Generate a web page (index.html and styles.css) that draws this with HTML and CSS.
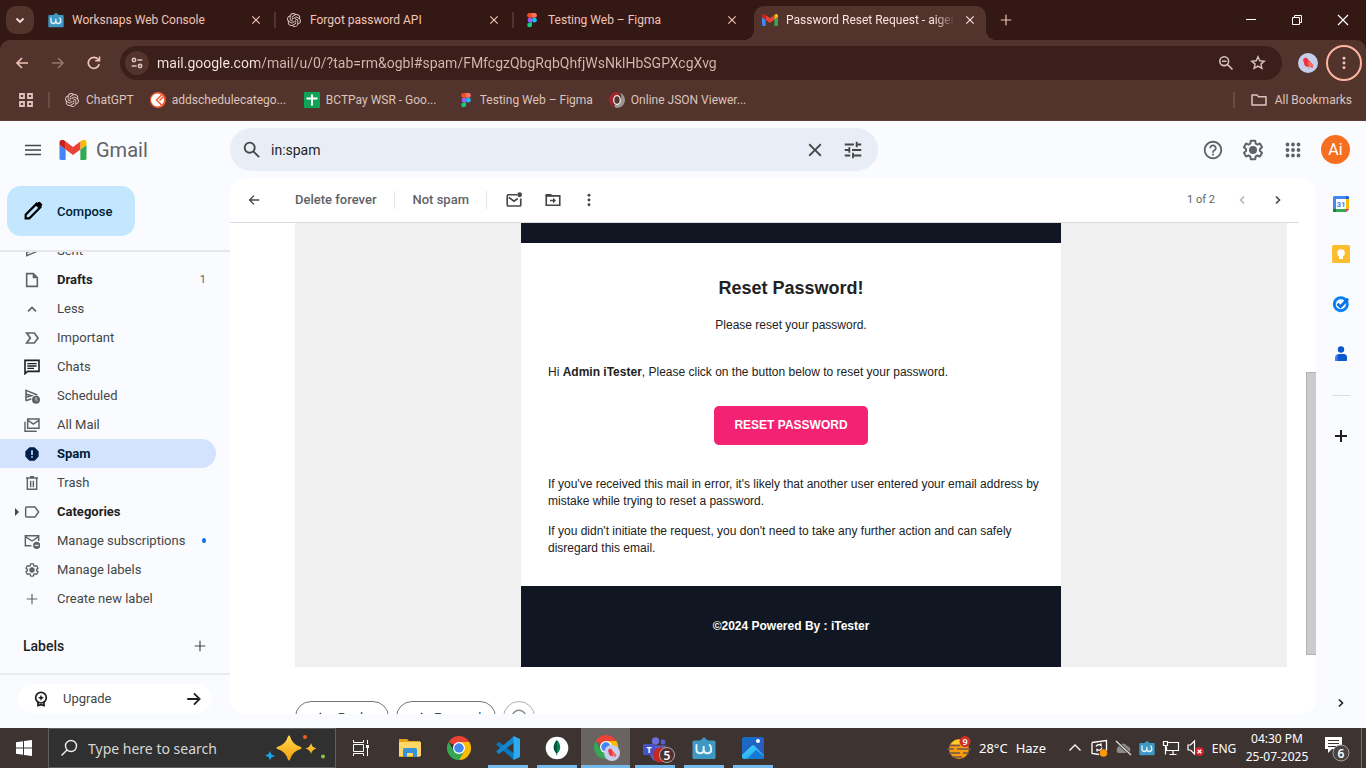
FILE: index.html
```html
<!DOCTYPE html>
<html lang="en">
<head>
<meta charset="utf-8">
<title>Password Reset Request - Gmail</title>
<link rel="stylesheet" href="styles.css">
</head>
<body>
<svg class="sprite" aria-hidden="true">
  <symbol id="openai" viewBox="0 0 24 24"><path fill="currentColor" d="M22.28 9.82a5.98 5.98 0 0 0-.52-4.91 6.05 6.05 0 0 0-6.51-2.9A6.07 6.07 0 0 0 4.98 4.18a5.98 5.98 0 0 0-4 2.9 6.05 6.05 0 0 0 .74 7.1 5.98 5.98 0 0 0 .51 4.91 6.05 6.05 0 0 0 6.52 2.9A5.98 5.98 0 0 0 13.26 24a6.06 6.06 0 0 0 5.77-4.21 5.99 5.99 0 0 0 4-2.9 6.06 6.06 0 0 0-.75-7.07zm-9.02 12.61a4.48 4.48 0 0 1-2.88-1.04l.14-.08 4.78-2.76a.79.79 0 0 0 .39-.68v-6.74l2.02 1.17a.07.07 0 0 1 .04.05v5.58a4.5 4.5 0 0 1-4.49 4.5zM3.6 18.3a4.47 4.47 0 0 1-.53-3.01l.14.08 4.78 2.76a.77.77 0 0 0 .78 0l5.84-3.37v2.33a.08.08 0 0 1-.03.06l-4.84 2.8A4.5 4.5 0 0 1 3.6 18.3zM2.34 7.9a4.49 4.49 0 0 1 2.37-1.98v5.68a.77.77 0 0 0 .38.68l5.82 3.35-2.02 1.17a.08.08 0 0 1-.07 0l-4.83-2.79A4.5 4.5 0 0 1 2.34 7.9zm16.6 3.85L13.1 8.36l2.02-1.16a.08.08 0 0 1 .07 0l4.83 2.79a4.49 4.49 0 0 1-.68 8.1v-5.67a.79.79 0 0 0-.4-.67zm2-3.02l-.14-.09-4.77-2.78a.78.78 0 0 0-.79 0L9.41 9.23V6.9a.07.07 0 0 1 .03-.06l4.83-2.79a4.5 4.5 0 0 1 6.68 4.66zM8.3 12.86l-2.02-1.16a.08.08 0 0 1-.03-.06V6.07a4.5 4.5 0 0 1 7.37-3.45l-.14.08L8.7 5.46a.79.79 0 0 0-.39.68zm1.1-2.36l2.6-1.5 2.61 1.5v3l-2.6 1.5-2.61-1.5z"/></symbol>
  <symbol id="figma" viewBox="0 0 16 16"><path d="M8 1H5.5a2.4 2.4 0 0 0 0 4.800H8z" fill="#f24e1e"/><path d="M8 1h2.500a2.400 2.400 0 0 1 0 4.800H8z" fill="#ff7262"/><path d="M8 5.800H5.500a2.400 2.400 0 0 0 0 4.700H8z" fill="#a259ff"/><circle cx="10.400" cy="8.150" r="2.400" fill="#1abcfe"/><path d="M8 10.500H5.500A2.400 2.400 0 1 0 8 12.900z" fill="#0acf83"/></symbol>
  <symbol id="worksnaps" viewBox="0 0 24 24"><path d="M3 4.500h5L12 1l4 3.500h5A2 2 0 0 1 23.500 7v14.500a1.500 1.500 0 0 1-1.500 1.500H2A1.500 1.500 0 0 1 .5 21.500V7A2 2 0 0 1 3 4.500z" fill="#3f98c4"/><path d="M4.500 9v4.500c0 5 7.200 5 7.200 0V10v3.500c0 5 7.500 5 7.500 0 0-2-.5-3.500-1.500-4.500" fill="none" stroke="#e6f4fa" stroke-width="2" stroke-linecap="round"/></symbol>
  <symbol id="gmail" viewBox="0 0 54 40"><path d="M3.700 40h8.600V19L0 9.800v26.500A3.700 3.700 0 0 0 3.700 40z" fill="#4285f4"/><path d="M41.700 40h8.600a3.700 3.700 0 0 0 3.700-3.700V9.800L41.700 19z" fill="#34a853"/><path d="M41.700 3.100V19L54 9.800V4.900c0-4.500-5.200-7.100-8.800-4.400z" fill="#fbbc04"/><path d="M12.300 19V3.100L27 14.100 41.700 3.100V19L27 30z" fill="#ea4335"/><path d="M0 4.900v4.900L12.300 19V3.100L8.800.5C5.200-2.200 0 .4 0 4.900z" fill="#c5221f"/></symbol>
  <symbol id="x" viewBox="0 0 24 24"><path fill="currentColor" d="M19 6.410 17.590 5 12 10.590 6.410 5 5 6.410 10.590 12 5 17.590 6.410 19 12 13.410 17.590 19 19 17.590 13.410 12z"/></symbol>
  <symbol id="plus" viewBox="0 0 24 24"><path fill="none" stroke="currentColor" stroke-width="2" d="M12 3v18M3 12h18"/></symbol>
  <symbol id="left" viewBox="0 0 24 24"><path fill="none" stroke="currentColor" stroke-width="2.400" d="M21 12H5M12 4.500 4.500 12l7.500 7.500"/></symbol>
  <symbol id="right" viewBox="0 0 24 24"><path fill="none" stroke="currentColor" stroke-width="2.400" d="M3 12h16M12 4.500l7.500 7.500-7.500 7.500"/></symbol>
  <symbol id="chev" viewBox="0 0 24 24"><path fill="none" stroke="currentColor" stroke-width="3.200" d="m8 5 7 7-7 7"/></symbol>
  <symbol id="dots" viewBox="0 0 24 24"><g fill="currentColor"><circle cx="12" cy="5" r="2.200"/><circle cx="12" cy="12" r="2.200"/><circle cx="12" cy="19" r="2.200"/></g></symbol>
  <symbol id="gear" viewBox="0 0 24 24"><path fill="currentColor" d="M13.850 22.250h-3.700c-.74 0-1.360-.54-1.450-1.270l-.27-1.890c-.27-.14-.53-.29-.79-.46l-1.800.72c-.7.26-1.470-.03-1.810-.65L2.200 15.530c-.35-.66-.2-1.440.36-1.880l1.530-1.190c-.01-.15-.02-.3-.02-.46 0-.15.01-.31.02-.46l-1.520-1.190c-.59-.45-.74-1.260-.37-1.880l1.850-3.190c.34-.62 1.110-.9 1.790-.63l1.810.73c.26-.17.52-.32.78-.46l.27-1.910c.09-.7.71-1.250 1.440-1.250h3.700c.74 0 1.360.54 1.450 1.270l.27 1.890c.27.14.53.29.79.46l1.800-.72c.71-.26 1.480.03 1.820.65l1.840 3.180c.36.66.2 1.440-.36 1.880l-1.520 1.190c.01.15.02.3.02.46s-.01.31-.02.46l1.520 1.190c.56.45.72 1.230.37 1.860l-1.860 3.220c-.34.62-1.110.9-1.800.63l-1.800-.72c-.26.17-.52.32-.78.46l-.27 1.910c-.1.68-.72 1.220-1.460 1.220zm-3.230-2h2.760l.37-2.550.53-.22c.44-.18.88-.44 1.340-.78l.45-.34 2.380.96 1.380-2.400-2.030-1.580.07-.56c.03-.26.06-.51.06-.78s-.03-.53-.06-.78l-.07-.56 2.030-1.580-1.390-2.400-2.390.96-.45-.35c-.42-.32-.87-.58-1.330-.77l-.52-.22-.37-2.550h-2.760l-.37 2.550-.53.21c-.44.19-.88.44-1.340.79l-.45.33-2.380-.95-1.390 2.390 2.030 1.580-.07.56a7 7 0 0 0-.06.79c0 .26.02.53.06.78l.07.56-2.030 1.580 1.380 2.400 2.390-.96.45.35c.43.33.86.58 1.330.77l.53.22.38 2.550z"/><circle cx="12" cy="12" r="4" fill="currentColor"/></symbol>
  <symbol id="chrome" viewBox="0 0 48 48"><path d="M24 24 3.200 12A24 24 0 0 1 44.800 12H24z" fill="#ea4335"/><path d="M24 24 13.600 30 3.200 12A24 24 0 0 0 24 48l10.400-18z" fill="#34a853"/><path d="M24 12h20.800A24 24 0 0 1 24 48l10.400-18z" fill="#fbbc04"/><circle cx="24" cy="24" r="12" fill="#fff"/><circle cx="24" cy="24" r="9.500" fill="#4285f4"/></symbol>
  <symbol id="bird" viewBox="0 0 20 20"><circle cx="10" cy="10" r="10" fill="#c7cdec"/><path d="M5 6.500 6.500 5c2-.5 3 .2 3.500 1.500l5.500 6-1 .5.500 2-3.500-1.500c-3 1-5.500-.5-5.500-3.500z" fill="#f0333f"/><path d="m10 8 5.500 4.500L11 14z" fill="#ff775f"/><path d="m10.500 13.500.5 2.500" stroke="#c96" stroke-width=".8"/></symbol>
</svg>

<header class="browser">
  <div class="tabstrip">
    <button class="tabsearch" aria-label="Search tabs"><svg class="i16" viewBox="0 0 16 16"><path d="m4.500 6.500 3.500 3.500 3.500-3.500" fill="none" stroke="currentColor" stroke-width="1.800"/></svg></button>
    <div class="tab"><svg class="i16"><use href="#worksnaps"/></svg><span class="title">Worksnaps Web Console</span><button aria-label="Close tab"><svg class="i14"><use href="#x"/></svg></button></div>
    <div class="tab"><svg class="i14 tint"><use href="#openai"/></svg><span class="title">Forgot password API</span><button aria-label="Close tab"><svg class="i14"><use href="#x"/></svg></button></div>
    <div class="tab"><svg class="i16"><use href="#figma"/></svg><span class="title">Testing Web – Figma</span><button aria-label="Close tab"><svg class="i14"><use href="#x"/></svg></button></div>
    <div class="tab active"><svg class="i16 mailfav"><use href="#gmail"/></svg><span class="title">Password Reset Request - aigen</span><button aria-label="Close tab"><svg class="i14"><use href="#x"/></svg></button></div>
    <button class="newtab" aria-label="New tab"><svg class="i14"><use href="#plus"/></svg></button>
    <div class="winctl">
      <button aria-label="Minimize"><svg class="i12" viewBox="0 0 12 12"><path d="M1 5.500h10" stroke="currentColor"/></svg></button>
      <button aria-label="Restore"><svg class="i12" viewBox="0 0 12 12"><path d="M1.500 3.500h7v7h-7zM3.500 3.500v-2h7v7h-2" fill="none" stroke="currentColor"/></svg></button>
      <button aria-label="Close"><svg class="i12" viewBox="0 0 12 12"><path d="m1 1 10 10M11 1 1 11" stroke="currentColor" stroke-width="1.200"/></svg></button>
    </div>
  </div>
  <div class="navbar">
    <button class="navbtn" aria-label="Back"><svg class="i16"><use href="#left"/></svg></button>
    <button class="navbtn dim" aria-label="Forward"><svg class="i16"><use href="#right"/></svg></button>
    <button class="navbtn" aria-label="Reload"><svg class="i16" viewBox="0 0 16 16"><path d="M13.200 9A5.500 5.500 0 1 1 12 4.300l1.200 1.200M13.500 1.500v4.300H9.200" fill="none" stroke="currentColor" stroke-width="1.600"/></svg></button>
    <div class="omnibox">
      <button class="siteinfo" aria-label="Site information"><svg class="i14" viewBox="0 0 16 16"><g fill="none" stroke="currentColor" stroke-width="1.800"><circle cx="4.500" cy="4.500" r="1.900"/><path d="M8.500 4.500H14M2 11.500h5.500"/><circle cx="11.500" cy="11.500" r="1.900"/></g></svg></button>
      <input class="url" type="text" aria-label="Address" value="mail.google.com/mail/u/0/?tab=rm&amp;ogbl#spam/FMfcgzQbgRqbQhfjWsNklHbSGPXcgXvg">
      <button class="omnibtn" aria-label="Zoom"><svg class="i16" viewBox="0 0 16 16"><g fill="none" stroke="currentColor" stroke-width="1.600"><circle cx="6.200" cy="6.200" r="4.400"/><path d="m9.500 9.500 5 5M4 6.200h4.400"/></g></svg></button>
      <button class="omnibtn" aria-label="Bookmark this tab"><svg class="i16" viewBox="0 0 16 16"><path d="m8 1.800 1.800 4 4.400.4-3.300 2.900 1 4.300L8 11.100l-3.900 2.300 1-4.300-3.300-2.900 4.400-.4z" fill="none" stroke="currentColor" stroke-width="1.400"/></svg></button>
    </div>
    <button class="profile" aria-label="Profile"><svg class="i20"><use href="#bird"/></svg></button>
    <button class="menu" aria-label="Menu"><svg class="i16"><use href="#dots"/></svg></button>
  </div>
  <nav class="bookmarks" aria-label="Bookmarks">
    <button class="apps" aria-label="Apps"><svg class="i16" viewBox="0 0 16 16"><path d="M2 2h4v4H2zM10 2h4v4h-4zM2 10h4v4H2zM10 10h4v4h-4z" fill="none" stroke="currentColor" stroke-width="1.800"/></svg></button>
    <span class="bsep"></span>
    <a href="#"><svg class="i16 tint pad1"><use href="#openai"/></svg>ChatGPT</a>
    <a href="#" class="wide"><svg class="i16" viewBox="0 0 16 16"><circle cx="8" cy="8" r="8" fill="#f4572f"/><circle cx="7.500" cy="8" r="6.500" fill="#fff"/><path d="M12.500 2 6.500 8l5.500 5.500M9.500 8.500 13 5" fill="none" stroke="#f4572f" stroke-width="1.500"/></svg>addschedulecatego...</a>
    <a href="#" class="wide"><svg class="i16" viewBox="0 0 16 16"><rect width="16" height="16" rx="1" fill="#0fa556"/><path d="M8 2.500v11M2.500 6.500h11" stroke="#fff" stroke-width="2"/></svg>BCTPay WSR - Goo...</a>
    <a href="#"><svg class="i16"><use href="#figma"/></svg>Testing Web – Figma</a>
    <a href="#"><svg class="i16" viewBox="0 0 16 16"><path d="M8 0a8 8 0 0 0-3 15.400A8 8 0 0 1 10.500 3C11 1.500 10 .3 8 0z" fill="#a5232c"/><path d="M8 16a8 8 0 0 0 3-15.400A8 8 0 0 1 5.500 13c-.5 1.500.5 2.700 2.500 3z" fill="#9a9694"/><ellipse cx="8" cy="8" rx="3.300" ry="4.500" fill="#52342c" stroke="#e9e1df" stroke-width="1.400"/></svg>Online JSON Viewer...</a>
    <span class="bsep last"></span>
    <a href="#" class="all"><svg class="i16" viewBox="0 0 16 16"><path d="M1 3h5l1.500 1.800H15V13H1z" fill="none" stroke="currentColor" stroke-width="1.500" stroke-linejoin="round"/></svg>All Bookmarks</a>
  </nav>
</header>

<div class="app">
  <header class="gbar">
    <div class="brand">
      <button class="burger" aria-label="Main menu"><svg class="i18" viewBox="0 0 18 18"><path d="M1 4.500h16M1 9h16M1 13.500h16" stroke="currentColor" stroke-width="1.500"/></svg></button>
      <svg class="logo"><use href="#gmail"/></svg><span class="wordmark">Gmail</span>
    </div>
    <form class="search" role="search">
      <button type="button" aria-label="Search mail"><svg class="i22" viewBox="0 0 24 24"><path fill="currentColor" d="M20.490 19l-5.730-5.730C15.530 12.200 16 10.910 16 9.500A6.500 6.500 0 1 0 9.500 16c1.410 0 2.700-.47 3.770-1.240L19 20.490 20.490 19zM5 9.500C5 7.010 7.010 5 9.500 5S14 7.010 14 9.500 11.990 14 9.500 14 5 11.990 5 9.500z"/></svg></button>
      <input type="text" aria-label="Search mail" value="in:spam">
      <button type="button" aria-label="Clear search"><svg class="i22"><use href="#x"/></svg></button>
      <button type="button" aria-label="Search options"><svg class="i22" viewBox="0 0 24 24"><path fill="currentColor" d="M3 17v2h6v-2H3zM3 5v2h10V5H3zm10 16v-2h8v-2h-8v-2h-2v6h2zM7 9v2H3v2h4v2h2V9H7zm14 4v-2H11v2h10zm-6-4h2V7h4V5h-4V3h-2v6z"/></svg></button>
    </form>
    <div class="gtools">
      <button aria-label="Support"><svg class="i22" viewBox="0 0 24 24"><path fill="currentColor" d="M11 18h2v-2h-2v2zm1-16C6.480 2 2 6.480 2 12s4.480 10 10 10 10-4.480 10-10S17.520 2 12 2zm0 18c-4.410 0-8-3.590-8-8s3.590-8 8-8 8 3.590 8 8-3.590 8-8 8zm0-14c-2.210 0-4 1.790-4 4h2c0-1.100.9-2 2-2s2 .9 2 2c0 2-3 1.750-3 5h2c0-2.250 3-2.500 3-5 0-2.210-1.790-4-4-4z"/></svg></button>
      <button aria-label="Settings"><svg class="i22" viewBox="1 1 22 22"><use href="#gear" width="24" height="24"/></svg></button>
      <button aria-label="Google apps"><svg class="i16" viewBox="0 0 16 16"><path d="M2.500 2.500h0M8 2.500h0M13.500 2.500h0M2.500 8h0M8 8h0M13.500 8h0M2.500 13.500h0M8 13.500h0M13.500 13.500h0" stroke="currentColor" stroke-width="3.800" stroke-linecap="round"/></svg></button>
      <button class="avatar" aria-label="Account">Ai</button>
    </div>
  </header>

  <div class="body">
    <aside class="sidebar">
      <div class="composewrap"><button class="compose"><svg class="i22" viewBox="0 0 24 24"><path d="M4 20v-4L16 4l4 4L8 20z" fill="none" stroke="currentColor" stroke-width="2.400"/><path d="m14.500 5.500 3-3a1.800 1.800 0 0 1 2.500 0L21.500 4a1.800 1.800 0 0 1 0 2.500l-3 3z" fill="currentColor"/></svg><span>Compose</span></button></div>
      <nav class="folders" aria-label="Folders">
        <ul>
          <li><a href="#"><svg class="i16" viewBox="0 0 24 24"><path d="M4 5v14l17-7zM4 10l7 2-7 2" fill="none" stroke="currentColor" stroke-width="2"/></svg>Sent</a></li>
          <li><a href="#" class="bold"><svg class="i16" viewBox="0 0 24 24"><path d="M4 2.500h10l6 6v13H4z" fill="none" stroke="currentColor" stroke-width="2.400"/><path d="M13 2v7.500h7z" fill="currentColor"/></svg>Drafts<span class="count">1</span></a></li>
          <li><a href="#"><svg class="i16" viewBox="0 0 24 24"><path d="m6 15.500 6-6 6 6" fill="none" stroke="currentColor" stroke-width="2.400"/></svg>Less</a></li>
          <li><a href="#"><svg class="i16" viewBox="0 0 24 24"><path d="M4 4.500h11.500l5.500 7.500-5.500 7.500H4L9.500 12z" fill="none" stroke="currentColor" stroke-width="2.600"/></svg>Important</a></li>
          <li><a href="#"><svg class="i16 black" viewBox="0 0 24 24"><path d="M1.500 2h21v16.500H5.500L1.500 22z" fill="none" stroke="currentColor" stroke-width="2.400"/><path d="M5 7h14M5 10.500h14M5 14h10" stroke="currentColor" stroke-width="2"/></svg>Chats</a></li>
          <li><a href="#"><svg class="i16" viewBox="0 0 24 24"><path d="M3 19V3.500l17 7M3 9l8 2.500L3 14" fill="none" stroke="currentColor" stroke-width="2.400"/><path d="m3 19 8-3" stroke="currentColor" stroke-width="2.400"/><circle cx="18" cy="17.500" r="6" fill="currentColor"/><path d="M18 14v3.500l2 1.500" fill="none" stroke="#f8fafd" stroke-width="1.300"/></svg>Scheduled</a></li>
          <li><a href="#"><svg class="i16" viewBox="0 0 24 24"><path d="M5.500 3H22.500v14H5.500zM6 5l8 5.500L22 5M1.500 7v14.500H19" fill="none" stroke="currentColor" stroke-width="2.200"/></svg>All Mail</a></li>
          <li><a href="#" class="bold on" aria-current="page"><svg class="i16" viewBox="0 0 24 24"><path d="M8.500 3h7L21 8.500v7L15.500 21h-7L3 15.500v-7z" fill="currentColor" stroke="currentColor" stroke-linejoin="round" stroke-width="2"/><path d="M12 6.500v7M12 15.500v2.200" stroke="#d3e3fd" stroke-width="2.400"/></svg>Spam</a></li>
          <li><a href="#"><svg class="i16" viewBox="0 0 24 24"><path d="M5 5v16.500h14V5M3 4.500h18M9 2.500h6M10 8.500v10M14 8.500v10" fill="none" stroke="currentColor" stroke-width="2.200"/></svg>Trash</a></li>
          <li><a href="#" class="bold expand"><svg class="i16" viewBox="0 0 24 24"><path d="M2.500 6A1.500 1.500 0 0 1 4 4.500h12.500L22 12l-5.500 7.500H4A1.500 1.500 0 0 1 2.500 18z" fill="none" stroke="currentColor" stroke-width="2.200"/></svg>Categories</a></li>
          <li><a href="#"><svg class="i16" viewBox="0 0 24 24"><path d="M11 19H2V4h20v8M2 5.500l10 6.500 10-6.500" fill="none" stroke="currentColor" stroke-width="2.200"/><circle cx="19" cy="18.500" r="5.500" fill="currentColor"/><path d="M16 18.500h6" stroke="#f8fafd" stroke-width="1.600"/></svg>Manage subscriptions<span class="dot"></span></a></li>
          <li><a href="#"><svg class="i16"><use href="#gear"/></svg>Manage labels</a></li>
          <li><a href="#"><svg class="i16 thin"><use href="#plus"/></svg>Create new label</a></li>
        </ul>
        <div class="labels"><h2>Labels</h2><button aria-label="Create new label"><svg class="i14"><use href="#plus"/></svg></button></div>
      </nav>
      <div class="upwrap"><a class="upgrade" href="#"><svg class="i16" viewBox="0 0 24 24"><path d="M7.500 16v6l4.500-1.500 4.500 1.500v-6" fill="none" stroke="currentColor" stroke-width="2.600"/><circle cx="12" cy="10" r="8" fill="none" stroke="currentColor" stroke-width="2.600"/><path d="m12 5.500 1.400 3 3.100 1.500-3.100 1.500-1.400 3-1.400-3L7.500 10l3.100-1.500z" fill="currentColor"/></svg><span>Upgrade</span><svg class="i18"><use href="#right"/></svg></a></div>
    </aside>

    <main class="panel">
      <div class="mailbar">
        <button class="ico back" aria-label="Back to Spam"><svg class="i14"><use href="#left"/></svg></button>
        <button class="act">Delete forever</button>
        <button class="act">Not spam</button>
        <button class="ico unread" aria-label="Mark as unread"><svg class="i18" viewBox="0 0 24 24"><path d="M16 5H4.500A1.500 1.500 0 0 0 3 6.500v12A1.500 1.500 0 0 0 4.500 20h15a1.500 1.500 0 0 0 1.500-1.500V10M5 8.500l7 5 5-3.500" fill="none" stroke="currentColor" stroke-width="2.200"/><circle cx="19.500" cy="5" r="3.200" fill="currentColor"/></svg></button>
        <button class="ico" aria-label="Move to"><svg class="i18" viewBox="0 0 24 24"><path d="M3 6.500h18V19H3z" fill="none" stroke="currentColor" stroke-width="2.200"/><path d="M2 4h7.500l2.500 3H2z" fill="currentColor"/><path d="M8 12.800h6" stroke="currentColor" stroke-width="2"/><path d="M12 9l4 3.800-4 3.800z" fill="currentColor"/></svg></button>
        <button class="ico" aria-label="More"><svg class="i16"><use href="#dots"/></svg></button>
        <span class="pos">1 of 2</span>
        <button class="ico off" aria-label="Newer"><svg class="i12 flip"><use href="#chev"/></svg></button>
        <button class="ico" aria-label="Older"><svg class="i12"><use href="#chev"/></svg></button>
      </div>
      <div class="scroll">
        <div class="canvas">
          <article class="mail">
            <div class="navy top"></div>
            <div class="content">
              <h1>Reset Password!</h1>
              <p class="sub">Please reset your password.</p>
              <p class="hi">Hi <b>Admin iTester</b>, Please click on the button below to reset your password.</p>
              <a class="reset" href="#">RESET PASSWORD</a>
              <p class="note">If you've received this mail in error, it's likely that another user entered your email address by mistake while trying to reset a password.</p>
              <p class="note">If you didn't initiate the request, you don't need to take any further action and can safely disregard this email.</p>
            </div>
            <footer class="navy foot">©2024 Powered By : iTester</footer>
          </article>
        </div>
        <div class="replies">
          <button class="rep"><svg class="i16" viewBox="0 0 24 24"><path d="M9 6 4 11l5 5M4 11h11c3 0 5 2 5 6" fill="none" stroke="currentColor" stroke-width="2"/></svg>Reply</button>
          <button class="rep"><svg class="i16" viewBox="0 0 24 24"><path d="m15 6 5 5-5 5M20 11H9c-3 0-5 2-5 6" fill="none" stroke="currentColor" stroke-width="2"/></svg>Forward</button>
          <button class="emoji" aria-label="Add reaction"><svg class="i18" viewBox="0 0 24 24"><circle cx="12" cy="12" r="9" fill="none" stroke="currentColor" stroke-width="2"/></svg></button>
        </div>
      </div>
      <div class="thumb"></div>
    </main>

    <aside class="rail" aria-label="Side panel">
      <button aria-label="Calendar"><svg class="i18" viewBox="0 0 18 18"><rect x="1" y="1" width="16" height="16" rx="1.500" fill="#4285f4"/><path d="M14 4h3v10h-3z" fill="#fbbc04"/><path d="M14 1h1.500A1.500 1.500 0 0 1 17 2.500V4h-3z" fill="#1967d2"/><path d="M4 14h10v3H4z" fill="#34a853"/><path d="M1 14h3v3H2.500A1.500 1.500 0 0 1 1 15.500z" fill="#188038"/><path d="M14 14h3l-3 3z" fill="#ea4335"/><path d="m17.500 14-3.500 3.500h3.500z" fill="#f8fafd"/><path d="M4 4h10v10H4z" fill="#fff"/><text x="9" y="12" text-anchor="middle" class="caltext">31</text></svg></button>
      <button aria-label="Keep"><svg class="i18" viewBox="0 0 18 18"><rect width="18" height="18" rx="1.500" fill="#fdbd31"/><circle cx="9" cy="8" r="3.800" fill="#fff"/><path d="M7 10h4v4H7z" fill="#fff"/></svg></button>
      <button aria-label="Tasks"><svg class="i18" viewBox="0 0 18 18"><circle cx="8.800" cy="9.200" r="6.500" fill="none" stroke="#0b80f5" stroke-width="3"/><path d="m5.500 8.800 3 3 7.500-8" fill="none" stroke="#0b6fe0" stroke-width="2.800"/></svg></button>
      <button aria-label="Contacts"><svg class="i18" viewBox="0 0 18 18"><circle cx="9" cy="4.500" r="3.200" fill="#0b57d0"/><path d="M3 16v-3a4 4 0 0 1 4-4h4a4 4 0 0 1 4 4v3z" fill="#4f7df0"/><path d="M5.500 16v-4a3 3 0 0 1 3-3H11a4 4 0 0 1 4 4v1a2 2 0 0 1-2 2z" fill="#0b57d0"/></svg></button>
      <span class="rule"></span>
      <button aria-label="Get add-ons"><svg class="i16 black" viewBox="0 0 16 16"><path d="M8 2v12M2 8h12" stroke="currentColor" stroke-width="2"/></svg></button>
      <button class="end black" aria-label="Hide side panel"><svg class="i12"><use href="#chev"/></svg></button>
    </aside>
  </div>
</div>

<footer class="taskbar">
  <button class="start" aria-label="Start"><svg class="i16" viewBox="0 0 16 16"><path d="m0 2.200 7-1v6.300H0zM8 1.100 16 0v7.500H8zM0 8.500h7v6.300l-7-1zM8 8.500h8V16l-8-1.100z" fill="#fff"/></svg></button>
  <label class="tsearch"><svg class="i18" viewBox="0 0 18 18"><g fill="none" stroke="#eee" stroke-width="1.400"><circle cx="11" cy="7" r="5.500"/><path d="M7 11 1.500 16.500"/></g></svg><input type="text" placeholder="Type here to search" aria-label="Type here to search">
    <svg class="spark" viewBox="0 0 62 28"><defs><linearGradient id="gold" x2="0" y2="1"><stop stop-color="#ffd84a"/><stop offset="1" stop-color="#f5a10c"/></linearGradient></defs><path d="M24 2.500q2.500 9 11.500 11.500-9 2.500-11.500 11.500-2.500-9-11.500-11.500 9-2.500 11.500-11.500z" fill="url(#gold)" stroke="url(#gold)" stroke-width="2" stroke-linejoin="round"/><path d="M46 9q1 4.500 5.500 5.500-4.500 1-5.500 5.500-1-4.500-5.500-5.500 4.500-1 5.500-5.500z" fill="url(#gold)"/><path d="m5 17 1.500 3.500L10 22l-3.500 1.500L5 26l-1.500-3L0 21.500 3.500 20z" fill="#18a5e8"/><circle cx="40" cy="3" r="2" fill="#ef6224"/><circle cx="58" cy="22.500" r="2" fill="#8bc53f"/></svg></label>
  <div class="pins">
    <button aria-label="Task View"><svg class="i16" viewBox="0 0 16 16"><path d="M.5 4.500h10v7H.5zM.5 0v2.500h10V0M.5 16v-2.500h10V16M14.500 0v4M14.500 8v8" fill="none" stroke="#fff"/><path d="M13 5h3v3h-3z" fill="#fff"/></svg></button>
    <button aria-label="File Explorer"><svg class="i24" viewBox="0 0 24 24"><path d="M1 3h8l2 2h11v16H1z" fill="#e6a416"/><path d="M1 6h22v14H1z" fill="#ffd667"/><path d="M5 21v-7.500A1.500 1.500 0 0 1 6.500 12h11a1.500 1.500 0 0 1 1.500 1.500V21h-4v-4H9v4z" fill="#3592dc"/></svg></button>
    <button aria-label="Chrome"><svg class="i24"><use href="#chrome"/></svg></button>
    <button class="run" aria-label="Visual Studio Code"><svg class="i24" viewBox="0 0 24 24"><path d="M18 24 .8 9.200a1 1 0 0 1 0-1.400l1.500-1.400a1 1 0 0 1 1.300 0L18 17.500z" fill="#0879bd"/><path d="M18 0 .8 14.800a1 1 0 0 0 0 1.400l1.500 1.400a1 1 0 0 0 1.300 0L18 6.500z" fill="#1386cd"/><path d="M17.500 0 24 3v18l-6.500 3z" fill="#2daaf1"/></svg></button>
    <button class="run" aria-label="MongoDB Compass"><svg class="i24" viewBox="0 0 24 24"><circle cx="12" cy="12" r="11.300" fill="#fff"/><path d="M12 4c4.500 5 4 10 .3 13.500L12 20l-.5-2.500C8 14 7.500 9 12 4z" fill="#09804c"/><path d="M12 4v16l-.5-2.500C8 14 7.500 9 12 4z" fill="#00593f"/></svg></button>
    <button class="run current" aria-label="Chrome profile"><svg class="i28" viewBox="0 0 28 28"><use href="#chrome" x="2" y="1" width="24" height="24"/><use href="#bird" x="12" y="11" width="16" height="16"/></svg></button>
    <button class="run" aria-label="Teams"><svg class="teams" viewBox="0 0 40 30"><circle cx="20.500" cy="8" r="3.700" fill="#6a70dc"/><circle cx="28" cy="9" r="2.500" fill="#5b5fc7"/><path d="M15 12.500h16v7a8 8 0 0 1-16 2z" fill="#5b5fc7"/><rect x="8" y="11" width="12" height="11" rx="1" fill="#4a50c4"/><text x="14" y="20" text-anchor="middle" class="tt">T</text><circle cx="25.500" cy="22" r="7.500" fill="#c8281e"/><circle cx="32" cy="22" r="7.500" fill="#4f302e" stroke="#b8a6a4"/><text x="32" y="26.500" text-anchor="middle" class="badge">5</text></svg></button>
    <button class="run" aria-label="Worksnaps"><svg class="i24"><use href="#worksnaps"/></svg></button>
    <button class="run" aria-label="Photos"><svg class="i24" viewBox="0 0 24 24"><defs><linearGradient id="sky" x2="1" y2="1"><stop stop-color="#1470c7"/><stop offset="1" stop-color="#3553bd"/></linearGradient><linearGradient id="hill" x2="1" y2="1"><stop stop-color="#4be0ff"/><stop offset="1" stop-color="#128be0"/></linearGradient></defs><rect x="1" y="1" width="22" height="22" rx="2.500" fill="url(#sky)"/><path d="m1 19 9.500-9a2.500 2.500 0 0 1 3.300 0L23 19v1.500a2.500 2.500 0 0 1-2.500 2.500h-17A2.500 2.500 0 0 1 1 20.500z" fill="url(#hill)"/><path d="m6 23 9-9 8 7-2 2z" fill="#1679d4"/><circle cx="17" cy="5" r="2" fill="#fff"/></svg></button>
  </div>
  <div class="tray">
    <button class="weather"><svg class="i24" viewBox="0 0 24 24"><circle cx="12" cy="13" r="10" fill="#f99b12"/><path d="M4 8a10 10 0 0 1 17 1z" fill="#ffce2d"/><path d="M2 9.500h11M16 9.500h6M0 13h7M10 13h14M2 17h11M16 17h6M6 21h9" stroke="#6b5a4e" stroke-width="1.400"/><circle cx="18" cy="5.500" r="5.500" fill="#cf3026"/><text x="18" y="8.500" text-anchor="middle" class="nine">9</text></svg><span>28°C</span><span>Haze</span></button>
    <button class="t" aria-label="Show hidden icons"><svg class="i14" viewBox="0 0 14 14"><path d="m1.500 9.500 5.500-5.500 5.500 5.500" fill="none" stroke="#fff" stroke-width="1.300"/></svg></button>
    <button class="t" aria-label="Updates"><svg class="i18" viewBox="0 0 18 18"><path d="M2 3.500 16.500 1.500v10M9 15.500l-7-1v-11" fill="none" stroke="#fff" stroke-width="1.300"/><path d="M6 7.500a3.200 3.200 0 0 1 5-1V4.200M12 8.500a3.200 3.200 0 0 1-5 2v2" fill="none" stroke="#fff" stroke-width="1.300"/><circle cx="13.500" cy="14" r="3.800" fill="#ff9708"/></svg></button>
    <button class="t" aria-label="OneDrive"><svg class="i18" viewBox="0 0 18 18"><path d="M4 14a4 4 0 0 1 0-6 5 5 0 0 1 9-1 4 4 0 0 1 2 7z" fill="#8d8987"/><path d="m2 2 15 14" stroke="#3d3432" stroke-width="3"/><path d="m2 2 15 14" stroke="#e6e2e1" stroke-width="1.200"/></svg></button>
    <button class="t" aria-label="Worksnaps"><svg class="i16"><use href="#worksnaps"/></svg></button>
    <button class="t" aria-label="Network"><svg class="i18" viewBox="0 0 18 18"><path d="M6 3.500h10.500v8H4.500v-4M11 11.500v4M7.500 15.500h7M1.500 2.500h4v4h-4zM3.500 6.500v9" fill="none" stroke="#fff" stroke-width="1.200"/></svg></button>
    <button class="t" aria-label="Volume muted"><svg class="i18" viewBox="0 0 18 18"><path d="M2 6h2.500l4-4v13l-4-4H2z" fill="none" stroke="#fff" stroke-width="1.200"/><circle cx="13.500" cy="12.500" r="4.500" fill="#d91f2b"/><path d="m11.700 10.700 3.600 3.600M15.300 10.700l-3.600 3.600" stroke="#fff" stroke-width="1.300"/></svg></button>
    <button class="lang">ENG</button>
    <button class="clock"><span>04:30 PM</span><span>25-07-2025</span></button>
    <button class="notes" aria-label="6 notifications"><svg class="i28" viewBox="0 0 28 28"><path d="M2 3h17v12H9l-4 4v-4H2z" fill="#fff"/><path d="M5 6.500h11M5 9.500h11M5 12.500h8" stroke="#3d3432"/><circle cx="18" cy="19" r="8" fill="#484341" stroke="#a5a09e"/><text x="18" y="23.500" text-anchor="middle" class="badge">6</text></svg></button>
    <span class="desk"></span>
  </div>
</footer>
</body>
</html>
```
FILE: styles.css
```css
* { box-sizing: border-box; }
body { margin: 0; height: 100vh; display: flex; flex-direction: column; overflow: hidden; font-family: Roboto, "Liberation Sans", sans-serif; font-size: 13px; color: #1f1f1f; }
button { border: 0; padding: 0; background: none; font: inherit; color: inherit; display: flex; align-items: center; justify-content: center; }
input { border: 0; padding: 0; background: none; font: inherit; color: inherit; outline: 0; min-width: 0; flex: 1; }
a { color: inherit; text-decoration: none; }
svg { flex: none; display: block; }
h1, h2, p, ul { margin: 0; padding: 0; }
ul { list-style: none; }
.sprite { position: absolute; width: 0; height: 0; }
.i12 { width: 12px; height: 12px; }
.i14 { width: 14px; height: 14px; }
.i16 { width: 16px; height: 16px; }
.i18 { width: 18px; height: 18px; }
.i20 { width: 20px; height: 20px; }
.i22 { width: 22px; height: 22px; }
.i24 { width: 24px; height: 24px; }
.i28 { width: 28px; height: 28px; }
.black { color: #1f1f1f; }
.tint { color: #e3c9c2; }
.pad1 { padding: 1px; }

/* Browser frame */
.browser { flex: none; background: #331814; font-family: Roboto, "Noto Sans", sans-serif; font-size: 12px; color: #f2c4b8; }
.tabstrip { display: flex; height: 40px; padding-left: 6px; }
.tabsearch { width: 28px; height: 28px; margin: 6px 6px 0 0; border-radius: 10px; background: #52342c; color: #f5e0da; }
.tab { width: 238px; display: flex; align-items: center; gap: 8px; padding: 0 15px 0 8px; position: relative; }
.tab .i14.tint { margin: 0 1px; }
.tab .title { flex: 1; white-space: nowrap; overflow: hidden; }
.tab button { width: 14px; height: 14px; }
.tab:nth-of-type(1)::after, .tab:nth-of-type(2)::after { content: ""; position: absolute; right: 2px; top: 12px; width: 2px; height: 16px; background: #52342c; }
.tab.active { width: 232px; margin-top: 6px; padding: 0 9px 6px 8px; background: #52342c; border-radius: 10px 10px 0 0; color: #fbe3dc; }
.tab.active::before, .tab.active::after { content: ""; position: absolute; bottom: 0; width: 10px; height: 10px; }
.tab.active::before { left: -10px; background: radial-gradient(circle at 0 0, transparent 10px, #52342c 10px); }
.tab.active::after { right: -10px; background: radial-gradient(circle at 100% 0, transparent 10px, #52342c 10px); }
.tab.active .title { -webkit-mask-image: linear-gradient(90deg, #000 88%, transparent); }
.mailfav { padding: 1px 0; }
.newtab { width: 28px; margin-left: 6px; }
.winctl { margin-left: auto; display: flex; color: #fff; }
.winctl button { width: 46px; }
.navbar { height: 46px; display: flex; align-items: center; padding: 0 4px; background: #52342c; border-radius: 10px 10px 0 0; }
.navbtn { width: 36px; height: 34px; }
.dim { color: #96756c; }
.omnibox { flex: 1; margin: 0 12px 0 8px; height: 34px; border-radius: 17px; background: #3b1f1a; display: flex; align-items: center; padding: 0 8px 0 5px; color: #dcc3bc; }
.siteinfo { width: 24px; height: 24px; border-radius: 50%; background: #52342c; margin-right: 8px; }
.url { font-size: 14px; color: transparent; background: linear-gradient(90deg, #fbe9e4 102px, #d5bab2 102px) text; -webkit-background-clip: text; }
.omnibtn { width: 32px; height: 32px; }
.profile { width: 28px; margin-right: 4px; }
.menu { width: 36px; height: 36px; border: 2px solid #ffb4a0; border-radius: 50%; }
.bookmarks { display: flex; align-items: center; height: 35px; padding: 0 14px 7px 18px; background: #52342c; border-bottom: 1px solid #5c3f38; color: #dcc3bc; }
.bookmarks a { display: flex; align-items: center; gap: 6px; margin-right: 16px; white-space: nowrap; }
.bookmarks .wide { width: 138px; }
.bookmarks a.all { gap: 8px; margin: 0; }
.bsep { width: 2px; height: 16px; margin: 0 14px; background: #6d4a42; }
.bsep.last { margin-left: auto; margin-right: 16px; }

/* Mail application */
.app { flex: 1; min-height: 0; display: flex; flex-direction: column; background: #f9fbff; color: #444746; }
.gbar { height: 58px; flex: none; display: flex; align-items: center; padding-bottom: 1px; }
.brand { width: 230px; display: flex; align-items: center; padding-left: 24px; }
.logo { width: 28px; height: 20px; margin: 0 9px 0 17px; }
.wordmark { font-size: 20px; color: #5f6368; }
.search { width: 648px; height: 43px; border-radius: 22px; background: #e9eef6; display: flex; align-items: center; padding: 0 6px 0 3px; font-size: 14px; }
.search button { width: 38px; height: 38px; }
.search input { color: #1f1f1f; }
.gtools { margin-left: auto; display: flex; align-items: center; padding-right: 16px; }
.gtools button { width: 40px; height: 40px; color: #5f6368; }
.gtools .avatar { width: 29px; height: 29px; margin-left: 8px; border-radius: 50%; background: #f66f20; color: #fff; font-size: 16px; }
.body { flex: 1; min-height: 0; display: flex; }
.sidebar { width: 230px; flex: none; display: flex; flex-direction: column; }
.composewrap { padding: 7px 7px 14px; border-bottom: 2px solid #e5e7eb; }
.compose { width: 128px; height: 50px; border-radius: 14px; background: #c2e7ff; color: #001d35; gap: 13px; justify-content: flex-start; padding-left: 15px; font-weight: 500; }
.compose svg { color: #000; }
.folders { flex: 1; min-height: 0; overflow: hidden; }
.folders ul { margin-top: -16px; }
.folders a { height: 29px; margin-right: 14px; padding: 0 10px 0 24px; display: flex; align-items: center; gap: 17px; border-radius: 0 15px 15px 0; position: relative; white-space: nowrap; }
.folders a svg { color: #5f6368; }
.folders a svg.black { color: #1f1f1f; }
.folders a.bold { font-weight: 700; color: #1f1f1f; }
.folders a.on { background: #d3e3fd; color: #001d35; }
.folders a.on svg { color: #001d49; }
.folders svg.thin { padding: 1px; }
.count { margin-left: auto; font-size: 11px; font-weight: 400; color: #5f6368; }
.dot { width: 5px; height: 5px; border-radius: 50%; background: #0b74e8; margin-left: auto; }
.expand::before { content: ""; position: absolute; left: 15px; border: 4px solid transparent; border-left-color: #444746; border-right-width: 0; }
.labels { display: flex; align-items: center; justify-content: space-between; padding: 21px 23px 0 23px; color: #1f1f1f; }
.labels h2 { font-size: 14px; font-weight: 500; line-height: 24px; }
.labels button { color: #444746; }
.upwrap { padding: 9px 18px 15px; border-top: 2px solid #e9ebef; }
.upgrade { display: flex; align-items: center; height: 29px; border-radius: 15px; background: #fff; padding: 0 9px 0 15px; gap: 14px; }
.upgrade span { flex: 1; }
.upgrade svg { color: #1f1f1f; }

.panel { flex: 1; min-width: 0; margin-bottom: 14px; border-radius: 14px; background: #fff; overflow: hidden; display: flex; flex-direction: column; position: relative; }
.mailbar { height: 44px; flex: none; margin-right: 17px; display: flex; align-items: center; border-bottom: 1px solid #dadce0; padding: 0 3px 2px 0; color: #444746; }
.ico { width: 36px; height: 36px; }
.mailbar .back { margin: 0 6px; }
.act { height: 18px; padding: 0 17px 0 18px; border-right: 1px solid #e3e5e8; color: #5f6368; font-weight: 500; }
.mailbar .back + .act { padding-left: 17px; }
.unread { margin: 0 3px 0 9px; }
.pos { margin-left: auto; margin-right: 9px; font-size: 11px; color: #5f6368; }
.off { color: #b5b7ba; }
.flip { transform: scaleX(-1); }
.scroll { flex: 1; min-height: 0; overflow: hidden; padding: 0 29px 0 65px; }
.canvas { background: #f0f0f0; display: flex; justify-content: center; }
.mail { width: 540px; font: 12px/17px "Liberation Sans", Arial, sans-serif; color: #222; background: #fff; }
.navy { background: #101722; color: #fff; }
.top { height: 20px; }
.content { padding: 33px 27px 29px; display: flex; flex-direction: column; }
.content h1 { font-size: 18px; line-height: 24px; text-align: center; }
.content p { margin-top: 13px; }
.content .sub { margin-top: 17px; text-align: center; }
.content .hi { margin-top: 30px; }
.content .note { margin-right: -12px; }
.reset { align-self: center; margin: 25px 0 18px; padding: 11px 20px; border-radius: 5px; background: #f42272; color: #fff; font-weight: 700; }
.foot { padding: 32px; text-align: center; font-weight: 700; }
.replies { display: flex; gap: 7px; padding-top: 34px; }
.rep { height: 32px; min-width: 94px; padding: 0 14px; gap: 7px; border: 1px solid #747775; border-radius: 16px; }
.emoji { width: 32px; height: 32px; border: 1px solid #b0b2b4; border-radius: 50%; color: #8b8d90; }
.thumb { position: absolute; right: 0; top: 36%; width: 10px; height: 53%; background: #cbcbcb; border: 1px solid #b2b2b2; border-right: 0; }

.rail { width: 50px; flex: none; display: flex; flex-direction: column; align-items: center; padding-bottom: 14px; }
.rail button { width: 36px; height: 50px; }
.rule { width: 18px; height: 1px; margin: 16px 0 15px; background: #dadce0; }
.rail .end { margin-top: auto; height: 22px; }
.caltext { font-size: 8px; font-weight: 700; fill: #4285f4; }

/* Desktop taskbar */
.taskbar { height: 40px; flex: none; display: flex; background: #3d3432; color: #fff; font-family: "Noto Sans", "Open Sans", sans-serif; font-size: 12px; }
.start { width: 48px; }
.tsearch { width: 288px; display: flex; align-items: center; background: #303030; border: 1px solid #625c5a; padding: 0 8px 0 11px; gap: 10px; font-size: 14px; }
.tsearch input::placeholder { color: #d7d7d7; opacity: 1; }
.spark { width: 62px; height: 28px; }
.pins { display: flex; }
.pins button { width: 49px; padding-top: 3px; border-bottom: 3px solid transparent; }
.pins .run { background: linear-gradient(#76b9ed, #76b9ed) center bottom / 40px 3px no-repeat border-box; }
.pins .current { background: #696361; border-color: #76b9ed; }
.teams { width: 40px; height: 30px; }
.tt { font-size: 9px; font-weight: 700; fill: #fff; }
.badge { font-size: 12px; fill: #fff; font-weight: 600; }
.nine { font-size: 9px; fill: #fff; font-weight: 600; }
.tray { margin-left: auto; display: flex; }
.weather { gap: 8px; font-size: 13px; margin-right: 17px; }
.t { width: 24px; }
.lang { width: 34px; }
.clock { flex-direction: column; width: 72px; margin-right: 10px; line-height: 18px; }
.notes { width: 38px; justify-content: flex-start; }
.desk { width: 1px; margin: 0 4px 0 0; background: #77706e; }
```
